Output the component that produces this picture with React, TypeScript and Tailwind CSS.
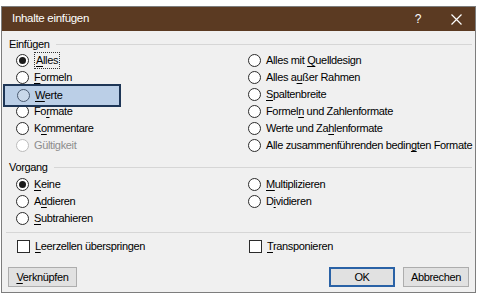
import React from 'react';

type Opt = { pre?: string; u?: string; post?: string; checked?: boolean; disabled?: boolean; focus?: boolean };

function Label({ pre = '', u = '', post = '' }: Opt) {
  return (
    <span className="whitespace-nowrap">
      {pre}
      {u && <span className="underline underline-offset-2">{u}</span>}
      {post}
    </span>
  );
}

function Radio(props: Opt) {
  const { checked, disabled, focus } = props;
  return (
    <div className="flex h-[17px] items-center gap-[5px]">
      <span
        className={`flex h-[13px] w-[13px] shrink-0 items-center justify-center rounded-full border bg-white ${
          disabled ? 'border-[#bcbcbc]' : 'border-[#2b2b2b]'
        }`}
      >
        {checked && <span className="h-[7px] w-[7px] rounded-full bg-[#1a1a1a]" />}
      </span>
      <span
        className={`leading-[15px] ${disabled ? 'text-[#8d8d8d]' : 'text-black'} ${
          focus ? 'border border-dotted border-[#333] px-[1px]' : ''
        }`}
      >
        <Label {...props} />
      </span>
    </div>
  );
}

function Checkbox(props: Opt) {
  return (
    <div className="flex h-[14px] items-center gap-[5px]">
      <span className="h-[13px] w-[13px] shrink-0 border border-[#2b2b2b] bg-white" />
      <Label {...props} />
    </div>
  );
}

function Section({ title }: { title: string }) {
  return (
    <div className="flex h-[14px] items-center gap-[6px] pl-[7px] pr-[3px]">
      <span className="leading-[14px]">{title}</span>
      <span className="h-px flex-1 bg-[#d6d6d6]" />
    </div>
  );
}

export default function App() {
  return (
    <div
      className="h-[300px] w-[481px] overflow-hidden bg-white pl-[1px] pt-[6px] text-[11px] tracking-[-0.35px] text-black"
      style={{ fontFamily: '"Liberation Sans", Arial, sans-serif' }}
    >
      <div className="relative flex h-[287px] w-[475px] flex-col border border-[#7d7d7d] bg-[#f0f0f0]">
        {/* title bar */}
        <div className="flex h-[24px] items-center bg-[#5b3a22] pl-[10px] pr-[12px] text-[11.5px] tracking-[-0.3px] text-white">
          <span className="flex-1">Inhalte einfügen</span>
          <span className="mr-[30px] text-[12px]">?</span>
          <svg width="11" height="11" viewBox="0 0 11 11" className="mr-[1px]">
            <path d="M0.5 0.5 L10.5 10.5 M10.5 0.5 L0.5 10.5" stroke="white" strokeWidth="1.2" />
          </svg>
        </div>

        <div className="mt-[6px]">
          <Section title="Einfügen" />
        </div>
        <div className="mt-[1px] grid grid-cols-[232px_1fr] pl-[14px]">
          <div className="flex flex-col">
            <Radio u="A" post="lles" checked focus />
            <Radio u="F" post="ormeln" />
            <Radio u="W" post="erte" />
            <Radio pre="Fo" u="r" post="mate" />
            <Radio pre="K" u="o" post="mmentare" />
            <Radio pre="Gültigkeit" disabled />
          </div>
          <div className="flex flex-col">
            <Radio pre="Alles mit " u="Q" post="uelldesign" />
            <Radio pre="Alles a" u="u" post="ßer Rahmen" />
            <Radio u="S" post="paltenbreite" />
            <Radio pre="Formel" u="n" post=" und Zahlenformate" />
            <Radio pre="Werte und Za" u="h" post="lenformate" />
            <Radio pre="Alle zusammenführenden bedin" u="g" post="ten Formate" />
          </div>
        </div>

        <div className="mt-[6px]">
          <Section title="Vorgang" />
        </div>
        <div className="mt-[2px] grid grid-cols-[232px_1fr] pl-[14px]">
          <div className="flex flex-col">
            <Radio u="K" post="eine" checked />
            <Radio pre="A" u="d" post="dieren" />
            <Radio u="S" post="ubtrahieren" />
          </div>
          <div className="flex flex-col">
            <Radio u="M" post="ultiplizieren" />
            <Radio pre="D" u="i" post="vidieren" />
          </div>
        </div>

        <div className="mx-[4px] mt-[5px] h-px bg-[#d6d6d6]" />

        <div className="mt-[6px] grid grid-cols-[232px_1fr] pl-[15px]">
          <Checkbox u="L" post="eerzellen überspringen" />
          <Checkbox u="T" post="ransponieren" />
        </div>

        <div className="mt-[14px] flex items-center px-[6px]">
          <button className="h-[20px] w-[69px] border border-[#adadad] bg-[#e1e1e1] text-[11px] leading-[18px]">
            <Label u="V" post="erknüpfen" />
          </button>
          <div className="flex-1" />
          <button className="h-[20px] w-[66px] border-2 border-[#2a62a6] bg-[#e1e1e1] text-[11px] leading-[16px]">
            OK
          </button>
          <button className="ml-[8px] h-[20px] w-[66px] border border-[#adadad] bg-[#e1e1e1] text-[11px] leading-[18px]">
            Abbrechen
          </button>
        </div>

        {/* annotation highlight over "Werte" */}
        <div className="absolute left-[1px] top-[77px] flex h-[23px] w-[118px] items-center border-2 border-[#1e3656] bg-[#bbcfe7] pl-[12px]">
          <div className="flex items-center gap-[5px]">
            <span className="h-[13px] w-[13px] rounded-full border border-[#4a5a70] bg-[#c9d8ea]" />
            <span className="leading-[15px]">
              <span className="underline underline-offset-2">W</span>erte
            </span>
          </div>
        </div>
      </div>
    </div>
  );
}
